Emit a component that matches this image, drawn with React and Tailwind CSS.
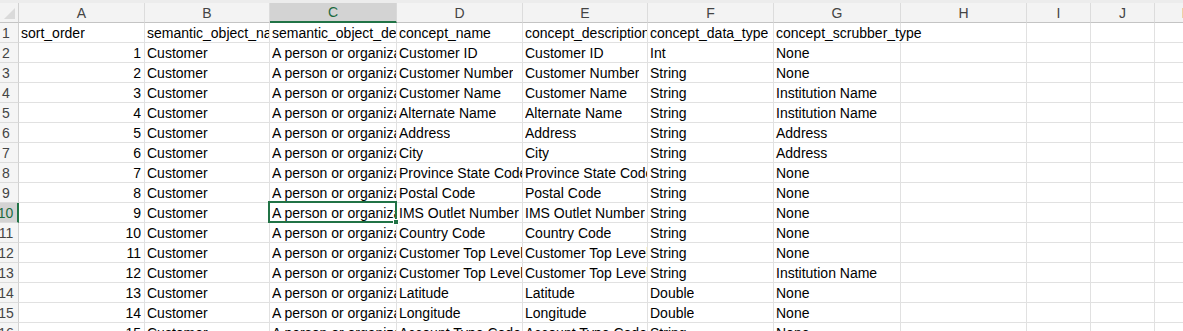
import React from "react";

const cols = ["A", "B", "C", "D", "E", "F", "G", "H", "I", "J", "K"];

const rows = [
  ["sort_order", "semantic_object_name", "semantic_object_description", "concept_name", "concept_description", "concept_data_type", "concept_scrubber_type"],
  [1, "Customer", "A person or organization", "Customer ID", "Customer ID", "Int", "None"],
  [2, "Customer", "A person or organization", "Customer Number", "Customer Number", "String", "None"],
  [3, "Customer", "A person or organization", "Customer Name", "Customer Name", "String", "Institution Name"],
  [4, "Customer", "A person or organization", "Alternate Name", "Alternate Name", "String", "Institution Name"],
  [5, "Customer", "A person or organization", "Address", "Address", "String", "Address"],
  [6, "Customer", "A person or organization", "City", "City", "String", "Address"],
  [7, "Customer", "A person or organization", "Province State Code", "Province State Code", "String", "None"],
  [8, "Customer", "A person or organization", "Postal Code", "Postal Code", "String", "None"],
  [9, "Customer", "A person or organization", "IMS Outlet Number", "IMS Outlet Number", "String", "None"],
  [10, "Customer", "A person or organization", "Country Code", "Country Code", "String", "None"],
  [11, "Customer", "A person or organization", "Customer Top Level ID", "Customer Top Level ID", "String", "None"],
  [12, "Customer", "A person or organization", "Customer Top Level Name", "Customer Top Level Name", "String", "Institution Name"],
  [13, "Customer", "A person or organization", "Latitude", "Latitude", "Double", "None"],
  [14, "Customer", "A person or organization", "Longitude", "Longitude", "Double", "None"],
  [15, "Customer", "A person or organization", "Account Type Code", "Account Type Code", "String", "None"],
];

const gridCols =
  "grid grid-cols-[19px_126px_125px_127px_126px_125px_126px_127px_126px_64px_64px_64px]";

const App = () => {
  return (
    <div
      className="h-[331px] w-[1183px] overflow-hidden bg-white text-black"
      style={{ fontFamily: '"Liberation Sans", Arial, sans-serif' }}
    >
      <div className="h-[3px] bg-[#ececec]" />

      {/* column letters */}
      <div className={gridCols}>
        <div className="relative h-[20px] border-r border-b border-r-[#d0d0d0] border-b-[#c4c4c4] bg-[#f3f3f3]">
          <svg className="absolute right-[3px] bottom-[3px]" width="11" height="11" viewBox="0 0 11 11">
            <polygon points="11,0 11,11 0,11" fill="#dadada" />
          </svg>
        </div>
        {cols.map((c) =>
          c === "C" ? (
            <div
              key={c}
              className="flex h-[20px] items-center justify-center border-r border-[#d9d9d9] border-b-2 border-b-[#217346] bg-[#d3d3d3] pt-[1px] text-[14px] text-[#1d6a3f]"
            >
              {c}
            </div>
          ) : (
            <div
              key={c}
              className="flex h-[20px] items-center justify-center border-r border-b border-r-[#dcdcdc] border-b-[#c4c4c4] bg-[#f3f3f3] pt-[1px] text-[14px] text-[#444]"
            >
              {c}
            </div>
          )
        )}
      </div>

      {rows.map((row, r) => {
        const n = r + 1;
        const active = n === 10;
        return (
          <div key={n} className={gridCols}>
            <div
              className={
                active
                  ? "flex h-[20px] items-center justify-center border-b border-[#dcdcdc] border-r-2 border-r-[#217346] bg-[#d3d3d3] pt-[1px] pr-[6px] text-[14px] text-[#1d6a3f]"
                  : "flex h-[20px] items-center justify-center border-r border-b border-r-[#d0d0d0] border-b-[#dcdcdc] bg-[#f5f5f5] pt-[1px] pr-[6px] text-[14px] text-[#444]"
              }
            >
              {n}
            </div>
            {cols.map((c, i) => {
              const v = row[i];
              const isNum = typeof v === "number";
              const selected = active && c === "C";
              const nextEmpty = row[i + 1] === undefined;
              return (
                <div
                  key={c}
                  className={
                    "relative flex h-[20px] min-w-0 items-center border-r border-b border-[#e1e1e1] pt-[1px] text-[14px] " +
                    (isNum ? "justify-end pr-[3px]" : "pl-[2px]")
                  }
                >
                  {v !== undefined &&
                    (nextEmpty ? (
                      <span className="relative z-10 whitespace-nowrap">{v}</span>
                    ) : (
                      <span className="block min-w-0 overflow-hidden whitespace-nowrap">{v}</span>
                    ))}
                  {selected && (
                    <div className="pointer-events-none absolute -top-[2px] -left-[2px] -right-[1px] -bottom-[1px] z-20 border-2 border-[#217346]">
                      <div className="absolute -right-[4px] -bottom-[4px] h-[6px] w-[6px] border border-white bg-[#217346]" />
                    </div>
                  )}
                </div>
              );
            })}
          </div>
        );
      })}
    </div>
  );
};

export default App;
